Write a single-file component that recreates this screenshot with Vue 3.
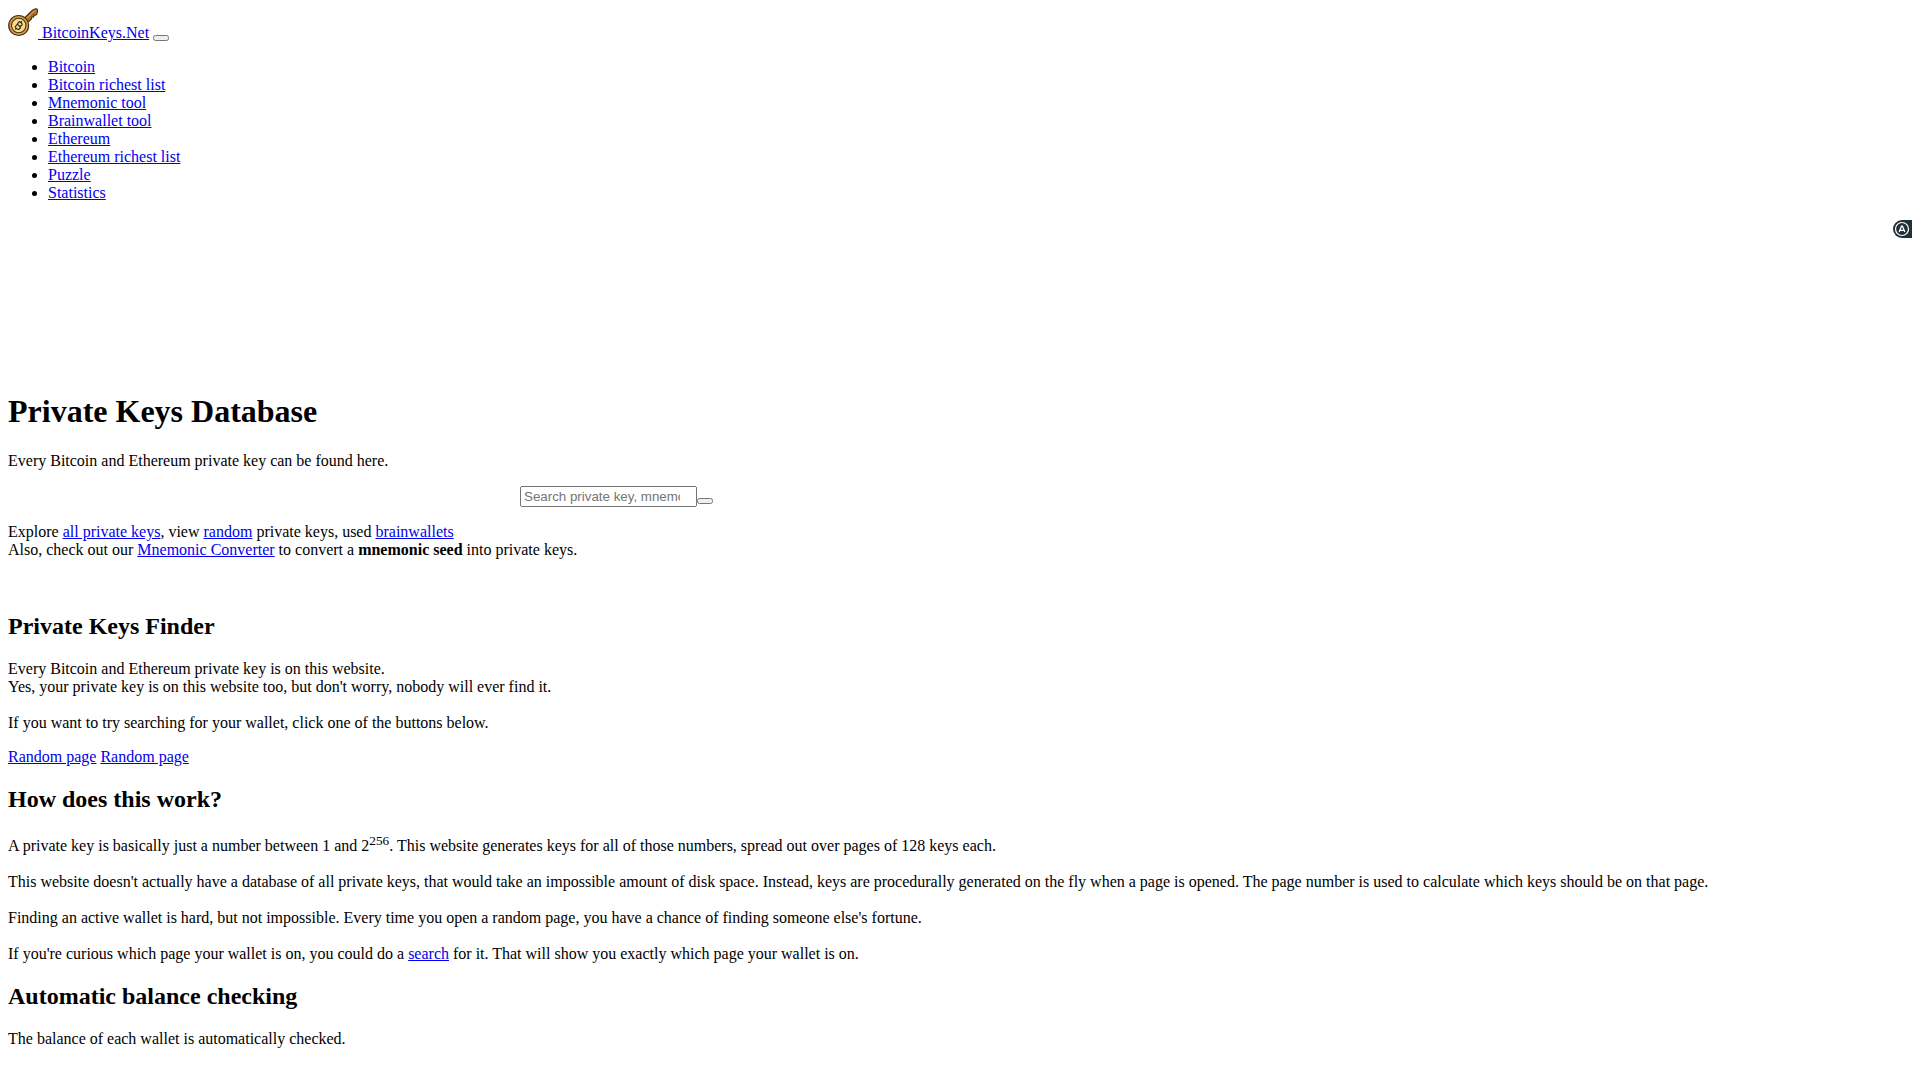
<script setup>
import { ref } from 'vue'

const query = ref('')
const links = [
  'Bitcoin',
  'Bitcoin richest list',
  'Mnemonic tool',
  'Brainwallet tool',
  'Ethereum',
  'Ethereum richest list',
  'Puzzle',
  'Statistics',
]
</script>

<template>
  <div class="page">
    <nav aria-label="Main">
      <a href="#"><svg class="logo" width="30" height="30" viewBox="0 0 30 30" aria-hidden="true">
        <path d="M16 10.500 L24.500 2.200 Q27 0.300 29 1 Q30 3.500 28.700 6 L27.300 7.200 L26 7 L25.500 9 L23.800 9.200 L23.300 11 L19.500 14.500 Z" fill="#d98b2b" stroke="#3a2c1c" stroke-width="1.200" stroke-linejoin="round" />
        <path d="M19.500 12 L28 3.200" stroke="#6b4519" stroke-width="0.900" />
        <circle cx="10.700" cy="17.500" r="10" fill="#e0993a" stroke="#3a3024" stroke-width="1.200" />
        <circle cx="10.700" cy="17.500" r="7.200" fill="#f6dc8c" stroke="#4a3820" stroke-width="1.100" />
        <g transform="rotate(38 10.700 17.500)" fill="none" stroke="#2e261c" stroke-width="1.200">
          <path d="M8.800 13.800 V21.200 M8.800 13.800 H11 C13.800 13.800 13.800 17.400 11 17.400 H8.800 M11 17.400 C14.400 17.400 14.400 21.200 11 21.200 H8.800 M10.600 12.300 V13.800 M10.600 21.200 V22.700" />
        </g>
      </svg> BitcoinKeys.Net</a>
      {{ ' ' }}<button type="button" aria-label="Toggle navigation"></button>
      <ul>
        <li v-for="link in links" :key="link"><a href="#">{{ link }}</a></li>
      </ul>
    </nav>

    <aside class="banner" aria-label="Advertisement">
      <svg width="19" height="18" viewBox="0 0 19 18" aria-hidden="true">
        <path d="M9 0 H19 V18 H9 A9 9 0 0 1 9 0 Z" fill="#203038" />
        <circle cx="9" cy="9" r="6.500" fill="none" stroke="#fff" stroke-width="1.200" />
        <path d="M6.200 12 L8.500 6.200 H9.500 L11.800 12 M7.300 10.300 H10.700" fill="none" stroke="#fff" stroke-width="1.300" />
      </svg>
    </aside>

    <main>
      <h1>Private Keys Database</h1>
      <p>Every Bitcoin and Ethereum private key can be found here.</p>

      <form class="search" @submit.prevent>
        <input v-model="query" type="search" aria-label="Search" placeholder="Search private key, mnemonic or address"><button type="submit" aria-label="Submit search"></button>
      </form>

      <p>
        Explore <a href="#">all private keys</a>, view <a href="#">random</a> private keys, used <a href="#">brainwallets</a><br>
        Also, check out our <a href="#">Mnemonic Converter</a> to convert a <b>mnemonic seed</b> into private keys.
      </p>
      <br>

      <h2>Private Keys Finder</h2>
      <p>
        Every Bitcoin and Ethereum private key is on this website.<br>
        Yes, your private key is on this website too, but don't worry, nobody will ever find it.<br><br>
        If you want to try searching for your wallet, click one of the buttons below.
      </p>
      <a href="#">Random page</a>{{ ' ' }}<a href="#">Random page</a>

      <h2>How does this work?</h2>
      <p>
        A private key is basically just a number between 1 and 2<sup>256</sup>. This website generates keys for all of those numbers, spread out over pages of 128 keys each.<br><br>
        This website doesn't actually have a database of all private keys, that would take an impossible amount of disk space. Instead, keys are procedurally generated on the fly when a page is opened. The page number is used to calculate which keys should be on that page.<br><br>
        Finding an active wallet is hard, but not impossible. Every time you open a random page, you have a chance of finding someone else's fortune.<br><br>
        If you're curious which page your wallet is on, you could do a <a href="#">search</a> for it. That will show you exactly which page your wallet is on.
      </p>

      <h2>Automatic balance checking</h2>
      <p>The balance of each wallet is automatically checked.</p>
    </main>
  </div>
</template>

<style scoped>
.page {
  padding: 8px;
  font-family: "Liberation Serif", "Times New Roman", serif;
  font-size: 16px;
}

ul {
  margin: 16px 0;
}

.banner {
  display: flex;
  justify-content: flex-end;
  align-items: flex-start;
  min-height: 152px;
  padding-top: 2px;
}

.search {
  max-width: 1217px;
  text-align: center;
}

.search input {
  box-sizing: border-box;
  width: 177px;
  font-family: "Liberation Sans", Arial, sans-serif;
}
</style>
